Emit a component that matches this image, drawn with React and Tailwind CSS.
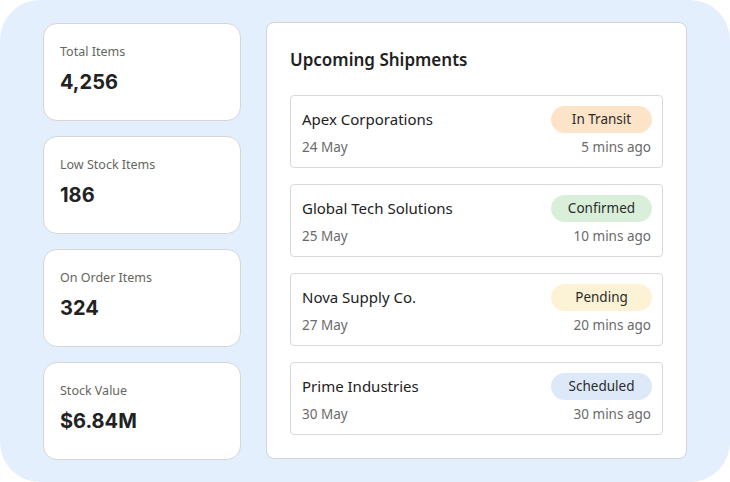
import React from "react";

const stats = [
  { label: "Total Items", value: "4,256" },
  { label: "Low Stock Items", value: "186" },
  { label: "On Order Items", value: "324" },
  { label: "Stock Value", value: "$6.84M" },
];

const shipments = [
  { name: "Apex Corporations", date: "24 May", ago: "5 mins ago", status: "In Transit", badge: "bg-[#fde3c8]" },
  { name: "Global Tech Solutions", date: "25 May", ago: "10 mins ago", status: "Confirmed", badge: "bg-[#d9efd9]" },
  { name: "Nova Supply Co.", date: "27 May", ago: "20 mins ago", status: "Pending", badge: "bg-[#fcf3d6]" },
  { name: "Prime Industries", date: "30 May", ago: "30 mins ago", status: "Scheduled", badge: "bg-[#dde9f8]" },
];

export default function App() {
  return (
    <div className="w-[730px] h-[482px] bg-white font-['Noto_Sans',sans-serif]">
      <div className="w-full h-full bg-[#e3effd] rounded-[40px] flex gap-[25px] pl-[43px] pt-[22px]">
        <div className="flex flex-col gap-[15px] pt-px">
          {stats.map((s) => (
            <div
              key={s.label}
              className="w-[198px] h-[98px] bg-white border border-[#d6d6d6] rounded-[14px] pl-[16px] pt-[18px]"
            >
              <div className="text-[12.5px] text-[#66665c] leading-[20px]">{s.label}</div>
              <div className="mt-[7px] text-[20px] font-bold text-[#222] leading-[26px] font-['Inter',sans-serif]">
                {s.value}
              </div>
            </div>
          ))}
        </div>

        <div className="w-[421px] h-[437px] bg-white border border-[#d4d4d4] rounded-[8px] px-[23px] pt-[24px]">
          <h2 className="text-[17px] font-semibold text-[#1f1f1f] leading-[26px]">Upcoming Shipments</h2>
          <div className="mt-[22px] flex flex-col gap-[16px]">
            {shipments.map((s) => (
              <div
                key={s.name}
                className="w-[373px] h-[73px] border border-[#d9d9d9] rounded-[4px] pl-[11px] pr-[10px] pt-[10px]"
              >
                <div className="flex items-center justify-between">
                  <span className="text-[15px] text-[#222] leading-[27px]">{s.name}</span>
                  <span
                    className={`${s.badge} w-[101px] h-[27px] rounded-full flex items-center justify-center text-[13.5px] text-[#2a2a2a]`}
                  >
                    {s.status}
                  </span>
                </div>
                <div className="flex items-center justify-between mt-[4px] pr-[1px]">
                  <span className="text-[13.5px] text-[#6a6a6a] leading-[20px]">{s.date}</span>
                  <span className="text-[13.5px] text-[#6a6a6a] leading-[20px]">{s.ago}</span>
                </div>
              </div>
            ))}
          </div>
        </div>
      </div>
    </div>
  );
}
